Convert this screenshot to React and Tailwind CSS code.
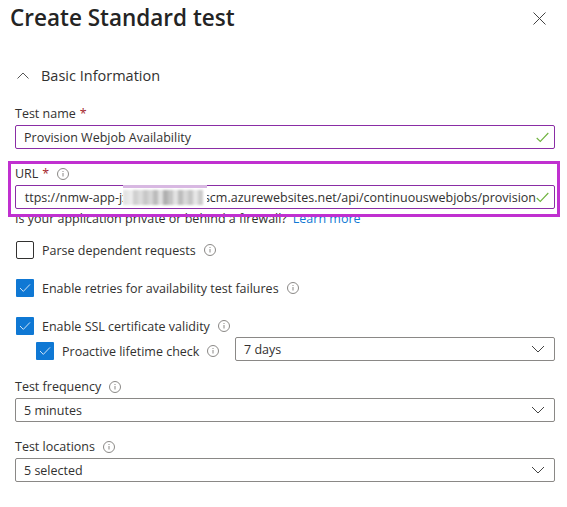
const font = { fontFamily: '"Open Sans", "Noto Sans", sans-serif' };

const blurCols = [
  "bg-[#e4e4e4]", "bg-[#ececec]", "bg-[#d0d0d0]", "bg-[#dcdcdc]", "bg-[#c8c8c8]", "bg-[#d6d6d6]",
  "bg-[#bcbcbc]", "bg-[#e0e0e0]", "bg-[#b0b0b0]", "bg-[#c4c4c4]", "bg-[#e2e2e2]", "bg-[#bdbdbd]",
  "bg-[#d8d8d8]", "bg-[#c6c6c6]", "bg-[#e6e6e6]", "bg-[#cccccc]",
];

function Info({ className = "" }) {
  return (
    <svg width="12" height="12" viewBox="0 0 12 12" className={`shrink-0 ${className}`} fill="none">
      <circle cx="6" cy="6" r="5.5" stroke="#8a8886" strokeWidth="1" />
      <rect x="5.5" y="5" width="1" height="3.5" fill="#8a8886" />
      <rect x="5.5" y="3" width="1" height="1" fill="#8a8886" />
    </svg>
  );
}

function Check() {
  return (
    <svg width="13" height="11" viewBox="0 0 13 11" fill="none" className="shrink-0">
      <path d="M0.7 6 L4.3 9.5 L12.3 1" stroke="#6fb33f" strokeWidth="1.1" />
    </svg>
  );
}

function Chevron() {
  return (
    <svg width="14" height="8" viewBox="0 0 14 8" fill="none" className="shrink-0">
      <path d="M1 1 L7 7 L13 1" stroke="#444" strokeWidth="1" />
    </svg>
  );
}

function Box({ checked, className = "" }) {
  return checked ? (
    <span className={`w-[18px] h-[18px] shrink-0 bg-[#0f78d4] rounded-[1px] flex items-center justify-center ${className}`}>
      <svg width="12" height="10" viewBox="0 0 12 10" fill="none">
        <path d="M1 5 L4.3 8.4 L11 1.4" stroke="#cfe4f7" strokeWidth="1" />
      </svg>
    </span>
  ) : (
    <span className={`w-[18px] h-[18px] shrink-0 border border-[#323130] rounded-[2px] bg-white ${className}`} />
  );
}

function Select({ children, className = "", textClass = "pt-[2px]" }) {
  return (
    <div className={`h-[24px] border border-[#8a8886] rounded-[2px] flex items-center justify-between pl-2 pr-[9px] text-[12.5px] text-[#323130] ${className}`}>
      <span className={textClass}>{children}</span>
      <Chevron />
    </div>
  );
}

function Label({ children, star, info }) {
  return (
    <div className="h-[20px] mb-[1px] flex items-center text-[12.5px] text-[#323130]">
      <span>{children}</span>
      {star && <span className="text-[#a4262c] ml-[4px]">*</span>}
      {info && <Info className="ml-[8px]" />}
    </div>
  );
}

function CheckRow({ checked, label, className = "" }) {
  return (
    <div className={`h-[18px] flex items-center text-[12.5px] text-[#323130] ${className}`}>
      <Box checked={checked} className="ml-[1px]" />
      <span className="ml-[8px] pt-[2px]">{label}</span>
      <Info className="ml-[8px]" />
    </div>
  );
}

export default function App() {
  return (
    <div className="relative w-[567px] h-[507px] bg-white overflow-hidden" style={font}>
      <header className="h-[36px] pl-[10px] pr-[21px] flex items-center justify-between">
        <h1 className="text-[22.5px] font-semibold leading-none text-[#242424]">Create Standard test</h1>
        <svg width="13" height="13" viewBox="0 0 13 13" fill="none" className="mt-[1px]">
          <path d="M0.5 0.5 L12.5 12.5 M12.5 0.5 L0.5 12.5" stroke="#444" strokeWidth="1" />
        </svg>
      </header>

      <div className="pl-[15px] pr-[12px]">
        <div className="mt-[29px] h-[20px] flex items-center">
          <svg width="12" height="7" viewBox="0 0 12 7" fill="none" className="ml-[2px]">
            <path d="M0.5 6.5 L6 1 L11.5 6.5" stroke="#555" strokeWidth="1" />
          </svg>
          <span className="ml-[12px] pt-[2px] text-[14.5px] text-[#323130]">Basic Information</span>
        </div>

        <div className="mt-[19px]">
          <Label star>Test name</Label>
          <div className="h-[24px] border border-[#8a2da5] rounded-[2px] flex items-center justify-between pl-2 pr-[5px] text-[12.5px] text-[#323130]">
            <span className="pt-[2px]">Provision Webjob Availability</span>
            <Check />
          </div>
        </div>

        <div className="mt-[15px]">
          <Label star info>URL</Label>
          <div className="relative h-[24px] border border-[#8a2da5] rounded-[2px] flex items-center pl-2 pr-[5px] text-[12.5px] text-[#323130]">
            <div className="flex-1 overflow-hidden flex justify-end whitespace-nowrap pt-[2px]">
              <span className="shrink-0">https://nmw-app-jxxxxxxxxxxxx.scm.azurewebsites.net/api/continuouswebjobs/provision</span>
            </div>
            <Check />
            <div className="absolute left-[107px] top-[-1px] w-[84px] h-[23px] bg-white overflow-hidden">
              <div className="h-[3px] bg-[#d8b8e2]" />
              <div className="mt-[2px] h-[15px] flex blur-[1px]">
                {blurCols.map((c, i) => (
                  <span key={i} className={`w-[5px] h-full ${c}`} />
                ))}
              </div>
            </div>
          </div>
        </div>

        <p className="mt-[-1px] h-[20px] flex items-center text-[12.5px] text-[#323130] pt-[2px]">
          Is your application private or behind a firewall?<span className="ml-[6px] text-[#0f78d4]">Learn more</span>
        </p>

        <CheckRow label="Parse dependent requests" className="mt-[13px]" />
        <CheckRow checked label="Enable retries for availability test failures" className="mt-[20px]" />
        <CheckRow checked label="Enable SSL certificate validity" className="mt-[20px]" />

        <div className="mt-[2px] flex items-start text-[12.5px] text-[#323130]">
          <div className="mt-[5px] h-[18px] flex items-center">
            <Box checked className="ml-[21px]" />
            <span className="ml-[8px] pt-[2px]">Proactive lifetime check</span>
            <Info className="ml-[8px]" />
          </div>
          <Select className="w-[320px] ml-auto" textClass="pt-[3px]">7 days</Select>
        </div>

        <div className="mt-[16px]">
          <Label info>Test frequency</Label>
          <Select>5 minutes</Select>
        </div>
        <div className="mt-[15px]">
          <Label info>Test locations</Label>
          <Select>5 selected</Select>
        </div>
      </div>

      <div className="absolute left-[8px] top-[161px] w-[552px] h-[56px] border-[3px] border-[#c030d0] pointer-events-none" />
    </div>
  );
}
